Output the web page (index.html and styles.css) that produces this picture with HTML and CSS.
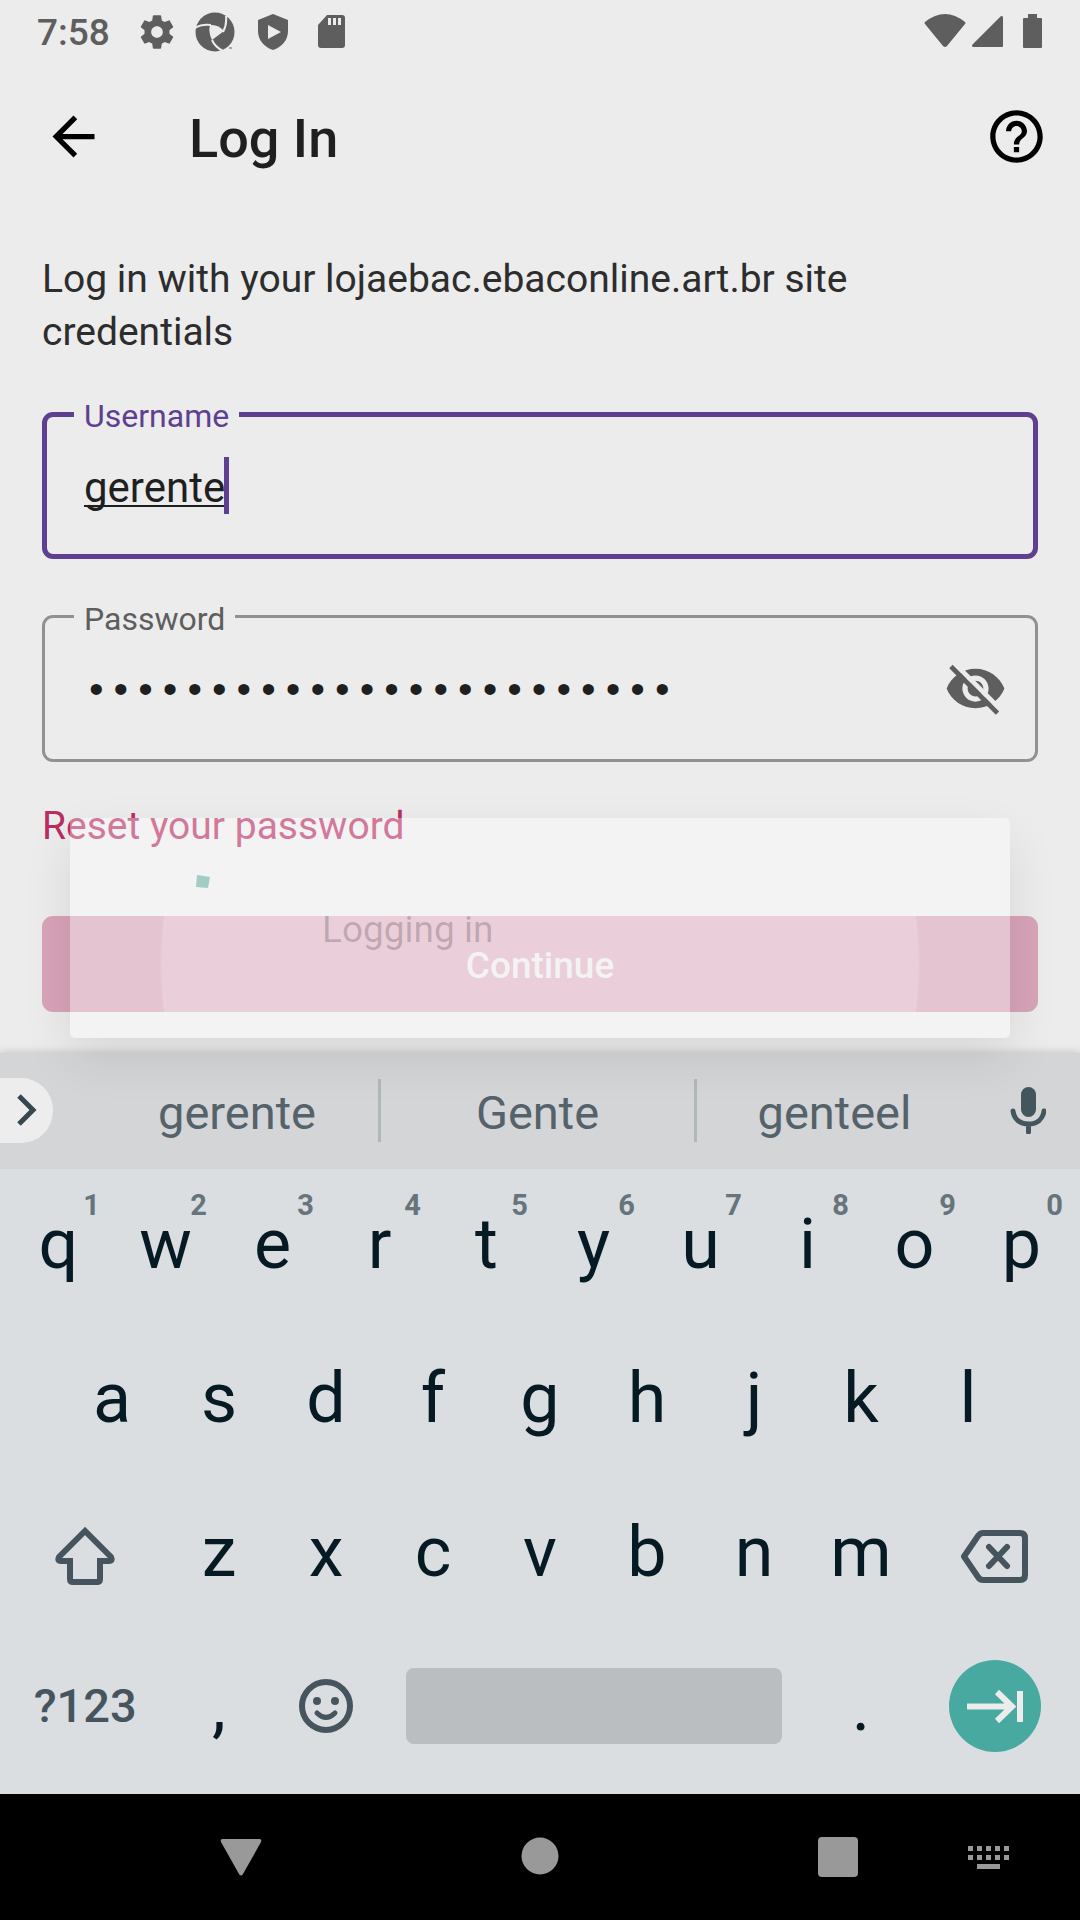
FILE: index.html
```html
<!DOCTYPE html>
<html lang="en">
<head>
<meta charset="utf-8">
<meta name="viewport" content="width=device-width, initial-scale=1">
<title>Log In</title>
<link rel="stylesheet" href="styles.css">
</head>
<body>
<div class="screen">
  <header class="status">
    <span class="clock">7:58</span>
    <svg class="status-icon gear" viewBox="0 0 24 24" aria-hidden="true"><path d="M19.43 12.98c.04-.32.07-.64.07-.98s-.03-.66-.07-.98l2.11-1.65c.19-.15.24-.42.12-.64l-2-3.46c-.12-.22-.39-.3-.61-.22l-2.49 1c-.52-.4-1.08-.73-1.69-.98l-.38-2.65C14.46 2.18 14.25 2 14 2h-4c-.25 0-.46.18-.49.42l-.38 2.65c-.61.25-1.17.59-1.69.98l-2.49-1c-.23-.09-.49 0-.61.22l-2 3.46c-.13.22-.07.49.12.64l2.11 1.65c-.04.32-.07.65-.07.98s.03.66.07.98l-2.11 1.65c-.19.15-.24.42-.12.64l2 3.46c.12.22.39.3.61.22l2.49-1c.52.4 1.08.73 1.69.98l.38 2.65c.03.24.24.42.49.42h4c.25 0 .46-.18.49-.42l.38-2.65c.61-.25 1.17-.59 1.69-.98l2.49 1c.23.09.49 0 .61-.22l2-3.46c.12-.22.07-.49-.12-.64l-2.11-1.65zM12 15.5c-1.93 0-3.5-1.57-3.5-3.5s1.57-3.5 3.5-3.5 3.500 1.570 3.500 3.500-1.570 3.500-3.500 3.500z"/></svg>
    <svg class="status-icon" viewBox="0 0 40 40" aria-hidden="true"><circle cx="20" cy="20" r="19.500"/><path class="cut" d="M15 13q8-1 14 6l-12 9q-4-8-2-15z"/><path class="cut-line" d="M0 16q6-4 16-3M28 20q4-7 3-16M17 28q3 7 11 11"/><path d="M34 35.500h3v1h-3z"/></svg>
    <svg class="status-icon" viewBox="0 0 40 40" aria-hidden="true"><path d="M20 2L5 8v11c0 9 6 16 15 19 9-3 15-10 15-19V8z"/><path class="cut" d="M15 13l13 7-13 7z"/></svg>
    <svg class="status-icon" viewBox="0 0 40 40" aria-hidden="true"><path d="M16 3h15a3 3 0 0 1 3 3v27a3 3 0 0 1-3 3H10a3 3 0 0 1-3-3V13z"/><path class="cut" d="M17 6h3v7h-3zM22 6h3v7h-3zM27 6h3v7h-3z"/></svg>
    <span class="spacer"></span>
    <svg class="signals" viewBox="0 0 120 40" aria-hidden="true"><path d="M1 10Q21-6 41 10q1 1 0 2L23 34q-2 2-4 0L1 12q-1-1 0-2z"/><path d="M76 5q2-2 3 0v29q0 1-1 1H49q-2-1 0-3z"/><path d="M104 2h9v4h4q1 0 1 1v28q0 1-1 1h-17q-1 0-1-1V7q0-1 1-1h4z"/></svg>
  </header>

  <div class="appbar">
    <button class="icon-button" type="button" aria-label="Back"><svg viewBox="0 0 24 24"><path d="M20 11H7.830l5.590-5.590L12 4l-8 8 8 8 1.410-1.410L7.830 13H20v-2z"/></svg></button>
    <h1 class="title">Log In</h1>
    <button class="icon-button" type="button" aria-label="Help"><svg viewBox="0 0 24 24"><path d="M11 18h2v-2h-2v2zm1-16C6.480 2 2 6.480 2 12s4.480 10 10 10 10-4.480 10-10S17.520 2 12 2zm0 18c-4.410 0-8-3.590-8-8s3.590-8 8-8 8 3.590 8 8-3.590 8-8 8zm0-14c-2.210 0-4 1.790-4 4h2c0-1.100.9-2 2-2s2 .9 2 2c0 2-3 1.750-3 5h2c0-2.250 3-2.500 3-5 0-2.210-1.790-4-4-4z"/></svg></button>
  </div>

  <main class="content">
    <form class="login">
      <p class="intro">Log in with your lojaebac.ebaconline.art.br site<br>credentials</p>
      <div class="field field-active">
        <label class="field-label" for="username">Username</label>
        <input class="field-input" id="username" type="text" value="gerente" autocomplete="off" spellcheck="false">
        <span class="caret"></span>
      </div>
      <div class="field">
        <label class="field-label" for="password">Password</label>
        <input class="field-input field-secret" id="password" type="password" value="gerente-loja-ebac-123456" autocomplete="off">
        <button class="icon-button eye" type="button" aria-label="Show password"><svg viewBox="0 0 24 24"><path d="M12 4.500C7 4.500 2.730 7.610 1 12c1.730 4.390 6 7.500 11 7.500s9.270-3.110 11-7.500c-1.730-4.390-6-7.500-11-7.500zM12 17c-2.760 0-5-2.240-5-5s2.240-5 5-5 5 2.240 5 5-2.240 5-5 5zm0-8c-1.660 0-3 1.340-3 3s1.340 3 3 3 3-1.340 3-3-1.340-3-3-3z"/><path class="eye-gap" d="M3.540 2L22 20.460"/><path class="eye-strike" d="M2.630 3.630L20.370 21.370"/></svg></button>
      </div>
      <a class="reset" href="#reset">Reset your password</a>
      <button class="continue" type="submit">Continue</button>
    </form>
  </main>

  <section class="keyboard" aria-label="Keyboard">
    <div class="suggestions">
      <button class="expand" type="button" aria-label="More"><svg viewBox="0 0 24 36"><path d="M4 4l14 14L4 32"/></svg></button>
      <button class="word" type="button">gerente</button>
      <button class="word word-middle" type="button">Gente</button>
      <button class="word" type="button">genteel</button>
      <button class="mic" type="button" aria-label="Voice input"><svg viewBox="0 0 36 48"><rect x="11" y="1" width="15" height="30" rx="7.500"/><path d="M3 25c1 8 7 13 15.500 13S33 33 34 25M18.500 38v8"/></svg></button>
    </div>
    <div class="keys">
      <div class="row">
        <button class="key" type="button">q<span class="hint">1</span></button>
        <button class="key" type="button">w<span class="hint">2</span></button>
        <button class="key" type="button">e<span class="hint">3</span></button>
        <button class="key" type="button">r<span class="hint">4</span></button>
        <button class="key" type="button">t<span class="hint">5</span></button>
        <button class="key" type="button">y<span class="hint">6</span></button>
        <button class="key" type="button">u<span class="hint">7</span></button>
        <button class="key" type="button">i<span class="hint">8</span></button>
        <button class="key" type="button">o<span class="hint">9</span></button>
        <button class="key" type="button">p<span class="hint">0</span></button>
      </div>
      <div class="row row-inset">
        <button class="key" type="button">a</button>
        <button class="key" type="button">s</button>
        <button class="key" type="button">d</button>
        <button class="key" type="button">f</button>
        <button class="key" type="button">g</button>
        <button class="key" type="button">h</button>
        <button class="key" type="button">j</button>
        <button class="key" type="button">k</button>
        <button class="key" type="button">l</button>
      </div>
      <div class="row">
        <button class="key key-wide key-icon" type="button" aria-label="Shift"><svg class="shift" viewBox="0 0 60 60"><path d="M30 5L4 31q-2 4 2 4h9v18q0 3 3 3h24q3 0 3-3V35h9q4 0 2-4z"/></svg></button>
        <button class="key" type="button">z</button>
        <button class="key" type="button">x</button>
        <button class="key" type="button">c</button>
        <button class="key" type="button">v</button>
        <button class="key" type="button">b</button>
        <button class="key" type="button">n</button>
        <button class="key" type="button">m</button>
        <button class="key key-wide key-icon" type="button" aria-label="Backspace"><svg class="backspace" viewBox="0 0 68 60"><path d="M22 7h37q5 0 5 5v37q0 5-5 5H22q-3 0-5-3L3 30.500 17 10q2-3 5-3zM28 21l18 19M46 21L28 40"/></svg></button>
      </div>
      <div class="row row-bottom">
        <button class="key key-wide key-symbols" type="button">?123</button>
        <button class="key" type="button">,</button>
        <button class="key key-icon" type="button" aria-label="Emoji"><svg class="emoji" viewBox="0 0 54 54"><circle cx="27" cy="27" r="24"/><path d="M18 34q9 9 18 0"/><path class="dots" d="M18 22v.1M36 22v.1"/></svg></button>
        <button class="key key-space" type="button" aria-label="Space"><span class="space-bar"></span></button>
        <button class="key" type="button">.</button>
        <button class="key key-wide key-icon" type="button" aria-label="Next"><svg class="next" viewBox="0 0 92 92"><circle cx="46" cy="46" r="46"/><path d="M18 46.500h45M48 32l15 14.500L48 61M71 31v31"/></svg></button>
      </div>
    </div>
  </section>

  <nav class="navbar" aria-label="System">
    <button class="nav-button nav-back" type="button" aria-label="Back"><svg viewBox="0 0 44 44"><path d="M3 4h38q2 1 1 3L24 39q-2 3-4 0L2 7q-1-2 1-3z"/></svg></button>
    <button class="nav-button nav-home" type="button" aria-label="Home"><svg viewBox="0 0 44 44"><circle cx="22" cy="21" r="18.500"/></svg></button>
    <button class="nav-button nav-recent" type="button" aria-label="Recent apps"><svg viewBox="0 0 44 44"><rect x="2" y="2" width="40" height="40" rx="4"/></svg></button>
    <button class="nav-button nav-ime" type="button" aria-label="Switch keyboard"><svg viewBox="0 0 44 44"><path d="M2 11h5v5H2zM11 11h5v5h-5zM20 11h5v5h-5zM29 11h5v5h-5zM38 11h5v5h-5zM2 20h5v5H2zM11 20h5v5h-5zM20 20h5v5h-5zM29 20h5v5h-5zM38 20h5v5h-5zM11 29h23v5H11z"/></svg></button>
  </nav>

  <div class="dialog" role="dialog" aria-label="Logging in">
    <svg class="spinner" viewBox="0 0 16 16" aria-hidden="true"><path d="M3 2l13 2-2 11-12-1z"/></svg>
    <span class="dialog-text">Logging in</span>
  </div>
</div>
</body>
</html>
```

FILE: styles.css
```css
* {
  box-sizing: border-box;
}

body {
  margin: 0;
  background: #ececec;
  color: #1f1f1f;
  font-family: Roboto, "Liberation Sans", sans-serif;
}

button {
  margin: 0;
  padding: 0;
  border: 0;
  background: none;
  color: inherit;
  font: inherit;
}

svg {
  display: block;
}

.screen {
  position: relative;
  display: flex;
  flex-direction: column;
  min-height: 100vh;
  overflow: hidden;
}

/* Status bar */

.status {
  display: flex;
  align-items: center;
  gap: 18px;
  height: 63px;
  padding: 0 36px 0 37px;
  color: #5e5e5e;
}

.clock {
  padding: 2px 9px 0 0;
  font-size: 37px;
  font-weight: 500;
  line-height: 44px;
}

.status-icon {
  width: 40px;
  height: 40px;
  fill: #5e5e5e;
}

.cut {
  fill: #ececec;
}

.cut-line {
  fill: none;
  stroke: #ececec;
  stroke-width: 2;
}

.spacer {
  flex: 1;
}

.signals {
  width: 120px;
  height: 40px;
  fill: #5e5e5e;
}

/* App bar */

.appbar {
  display: flex;
  align-items: center;
  height: 147px;
  padding: 0 32px 0 42px;
}

.icon-button {
  flex: none;
  width: 63px;
  height: 63px;
}

.title {
  flex: 1;
  margin: 0;
  padding: 3px 0 0 84px;
  font-size: 54px;
  font-weight: 500;
  line-height: 63px;
}

/* Login form */

.content {
  flex: 1;
}

.login {
  display: flex;
  flex-direction: column;
  padding: 43px 42px 40px;
}

.intro {
  margin: 0 0 53px;
  color: #2d2d2d;
  font-size: 39px;
  line-height: 53px;
}

.field {
  position: relative;
  display: flex;
  align-items: center;
  height: 147px;
  padding: 0 28px 0 39px;
  border: 3px solid #919191;
  border-radius: 11px;
}

.field-active {
  margin-bottom: 56px;
  padding: 0 37px;
  border: 5px solid #5f3f8f;
}

.field-label {
  position: absolute;
  top: -19px;
  left: 29px;
  padding: 0 10px;
  background: #ececec;
  color: #5e5e5e;
  font-size: 32px;
  line-height: 40px;
}

.field-active .field-label {
  top: -21px;
  left: 27px;
  color: #5f3f8f;
}

.field-input {
  flex: 1;
  min-width: 0;
  height: 63px;
  padding: 4px 0 0;
  border: 0;
  outline: 0;
  background: none;
  color: #1f1f1f;
  font: 42px/56px Roboto, "Liberation Sans", sans-serif;
}

.field-active .field-input {
  text-decoration: underline 2px;
  text-decoration-skip-ink: none;
  text-underline-offset: 3px;
}

.field-secret {
  padding-top: 6px;
  font: 41px/56px "Liberation Mono", monospace;
}

.caret {
  position: absolute;
  top: 40px;
  left: 177px;
  width: 5px;
  height: 57px;
  background: #5f3f8f;
}

.eye {
  fill: #5e5e5e;
}

.eye-gap,
.eye-strike {
  fill: none;
  stroke: #5e5e5e;
  stroke-width: 1.8;
}

.eye-gap {
  stroke: #ececec;
}

.reset {
  align-self: flex-start;
  margin: 42px 0 68px;
  color: #b92d62;
  font-size: 39px;
  line-height: 44px;
  text-decoration: none;
}

.continue {
  height: 96px;
  padding-top: 3px;
  border-radius: 11px;
  background: radial-gradient(circle at center, #dfb3c4 378px, #d7a3b8 380px);
  color: #ececec;
  font-size: 37px;
  font-weight: 500;
  line-height: 44px;
}

/* Progress dialog */

.dialog {
  position: absolute;
  top: 818px;
  right: 70px;
  left: 70px;
  display: flex;
  height: 220px;
  padding: 0 124px;
  border-radius: 5px;
  background: rgba(255, 255, 255, 0.36);
  box-shadow: 0 20px 50px rgba(0, 0, 0, 0.09);
}

.spinner {
  width: 16px;
  height: 16px;
  margin: 55px 112px 0 0;
  fill: #a2ccc6;
}

.dialog-text {
  margin-top: 90px;
  color: rgba(0, 0, 0, 0.19);
  font-size: 37px;
  line-height: 44px;
}

/* Keyboard */

.keyboard {
  background: #dadee1;
  box-shadow: 0 0 9px rgba(0, 0, 0, 0.2);
}

.suggestions {
  display: grid;
  grid-template-columns: 96px 282fr 319fr 275fr 108px;
  align-items: center;
  height: 116px;
  padding-bottom: 2px;
  background: #d4d5d7;
}

.expand {
  width: 53px;
  height: 65px;
  padding: 0 0 0 15px;
  border-radius: 0 32px 32px 0;
  background: #ededed;
}

.expand svg {
  width: 24px;
  height: 36px;
  fill: none;
  stroke: #37474f;
  stroke-width: 5;
}

.word {
  height: 63px;
  padding-top: 5px;
  color: #546269;
  font-size: 47px;
  line-height: 58px;
}

.word-middle {
  border: 0 solid #b0b8b8;
  border-width: 0 3px;
}

.mic {
  justify-self: center;
  padding-left: 3px;
}

.mic svg {
  width: 36px;
  height: 48px;
  fill: #44555d;
}

.mic path {
  fill: none;
  stroke: #44555d;
  stroke-width: 5;
  stroke-linecap: round;
}

.keys {
  padding: 0 5px 9px;
}

.row {
  display: flex;
  height: 154px;
}

.row-inset {
  padding: 0 5%;
}

.key {
  position: relative;
  flex: 2 1 0;
  padding-bottom: 5px;
  color: #061a24;
  font-size: 70px;
  line-height: 80px;
}

.hint {
  position: absolute;
  top: 18px;
  right: 12px;
  color: #66747b;
  font-size: 29px;
  font-weight: 700;
  line-height: 36px;
}

.key-wide {
  flex-grow: 3;
}

.key-icon {
  display: flex;
  align-items: center;
  justify-content: center;
  padding: 4px 0 0;
}

.row-bottom .key {
  padding: 0 0 4px;
}

.key-icon svg {
  fill: none;
  stroke: #46555d;
  stroke-width: 6;
}

.shift {
  width: 60px;
  height: 60px;
}

.backspace {
  width: 68px;
  height: 60px;
  stroke-linecap: round;
}

.key-symbols {
  color: #46555d;
  font-size: 47px;
  font-weight: 500;
}

.emoji {
  width: 54px;
  height: 54px;
  stroke-linecap: round;
}

.emoji path {
  stroke-width: 5;
}

.emoji .dots {
  stroke-width: 8;
}

.key-space {
  flex-grow: 8;
}

.space-bar {
  display: block;
  height: 76px;
  margin: 0 26px;
  border-radius: 8px;
  background: #babec1;
}

.next {
  width: 92px;
  height: 92px;
}

.key-icon .next circle {
  fill: #48a9a0;
  stroke: none;
}

.key-icon .next path {
  stroke: #ececec;
}

/* System navigation */

.navbar {
  display: grid;
  grid-template-columns: 100px 1fr 100px 1fr 100px 50px 100px;
  align-items: center;
  height: 126px;
  padding: 0 42px 0 191px;
  background: #000;
}

.nav-button {
  display: flex;
  justify-content: center;
}

.nav-button svg {
  width: 44px;
  height: 44px;
  fill: #999;
}

.nav-home {
  grid-column: 3;
}

.nav-recent {
  grid-column: 5;
}

.nav-ime {
  grid-column: 7;
}
```
